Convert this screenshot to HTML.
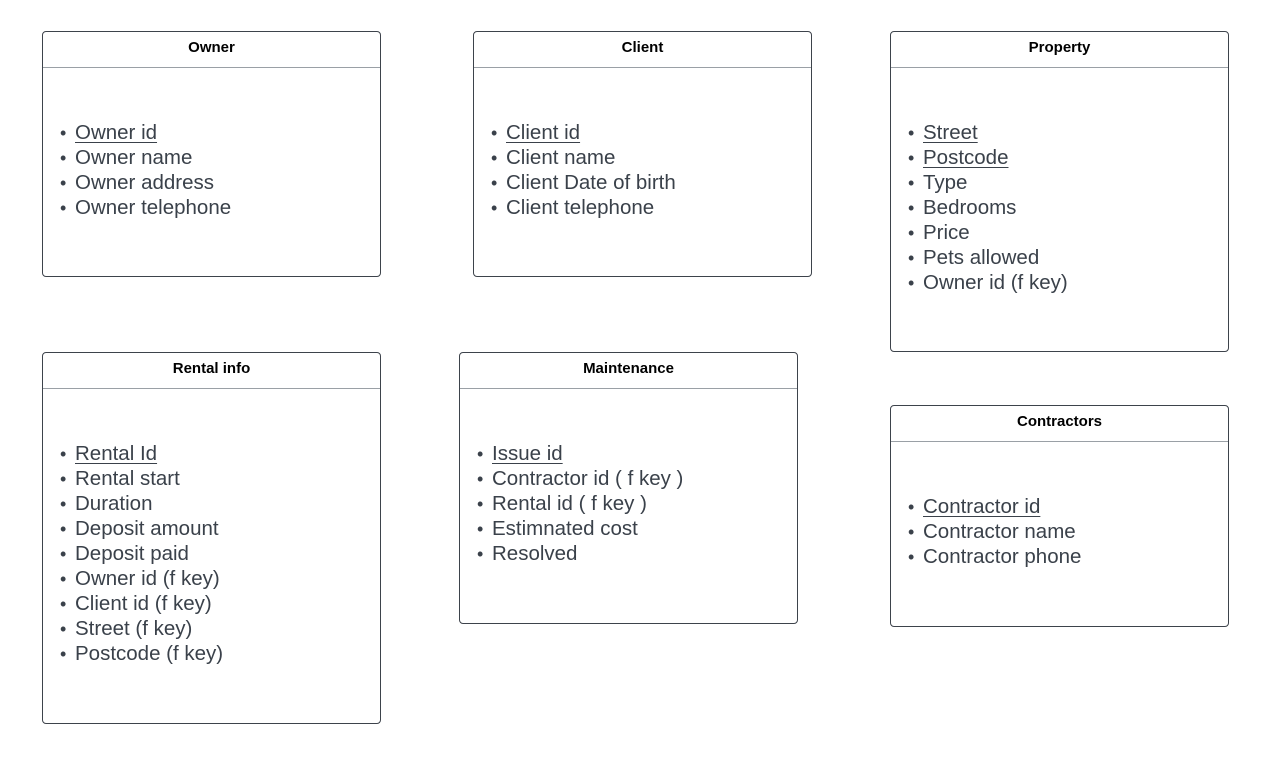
<!DOCTYPE html>
<html><head><meta charset="utf-8"><style>
body{margin:0;width:1282px;height:783px;background:#fff;font-family:"Liberation Sans",Arial,sans-serif;position:relative;overflow:hidden}
.b{position:absolute;border:1px solid #3d434b;border-radius:4px;box-sizing:border-box;width:339px}
.h{height:35px;border-bottom:1px solid #9aa0a6;text-align:center;font-weight:bold;font-size:15px;line-height:31px;color:#000}
ul{list-style:none;margin:0;padding:0;position:absolute;left:17px;top:88px;font-size:20.5px;color:#3a414a}
li{height:25px;line-height:25px;white-space:nowrap}
li:before{content:"•";display:inline-block;width:15px;font-size:18px}
u{text-underline-offset:3px;text-decoration-thickness:1px}
</style></head><body>
<div class="b" style="left:42px;top:31px;height:246px"><div class="h">Owner</div><ul><li><u>Owner id</u></li><li>Owner name</li><li>Owner address</li><li>Owner telephone</li></ul></div>
<div class="b" style="left:473px;top:31px;height:246px"><div class="h">Client</div><ul><li><u>Client id</u></li><li>Client name</li><li>Client Date of birth</li><li>Client telephone</li></ul></div>
<div class="b" style="left:890px;top:31px;height:321px"><div class="h">Property</div><ul><li><u>Street</u></li><li><u>Postcode</u></li><li>Type</li><li>Bedrooms</li><li>Price</li><li>Pets allowed</li><li>Owner id (f key)</li></ul></div>
<div class="b" style="left:42px;top:352px;height:372px"><div class="h">Rental info</div><ul><li><u>Rental Id</u></li><li>Rental start</li><li>Duration</li><li>Deposit amount</li><li>Deposit paid</li><li>Owner id (f key)</li><li>Client id (f key)</li><li>Street (f key)</li><li>Postcode (f key)</li></ul></div>
<div class="b" style="left:459px;top:352px;height:272px"><div class="h">Maintenance</div><ul><li><u>Issue id</u></li><li>Contractor id ( f key )</li><li>Rental id ( f key )</li><li>Estimnated cost</li><li>Resolved</li></ul></div>
<div class="b" style="left:890px;top:405px;height:222px"><div class="h">Contractors</div><ul><li><u>Contractor id</u></li><li>Contractor name</li><li>Contractor phone</li></ul></div>
</body></html>
